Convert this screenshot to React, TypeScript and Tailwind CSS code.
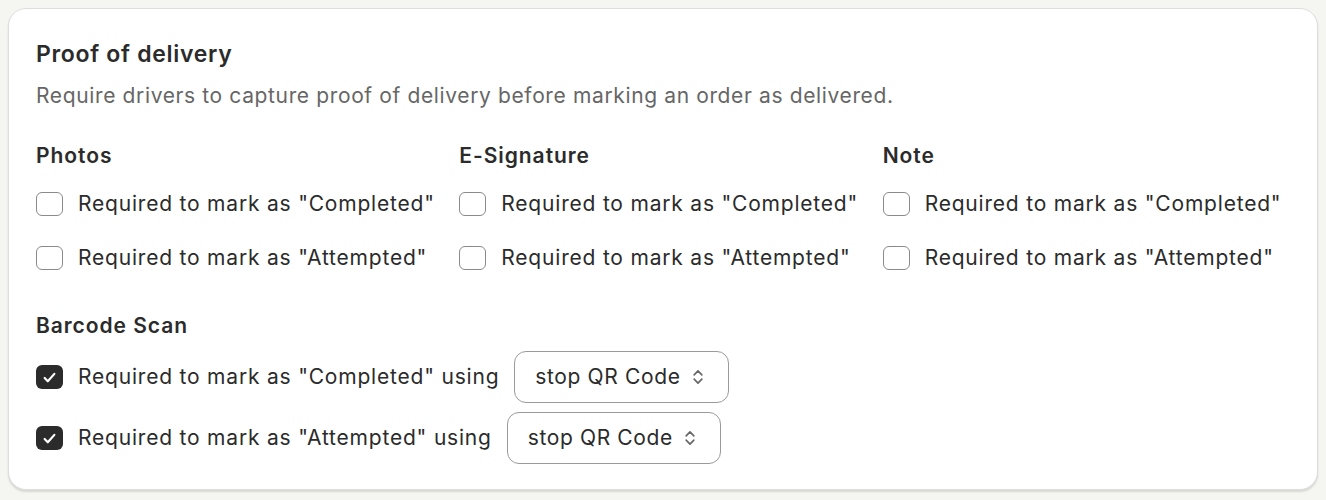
import { useState } from 'react'

type Col = { title: string; completed: boolean; attempted: boolean }

const COLS: Col[] = [
  { title: 'Photos', completed: false, attempted: false },
  { title: 'E-Signature', completed: false, attempted: false },
  { title: 'Note', completed: false, attempted: false },
]

function Check({ checked, onChange }: { checked: boolean; onChange: () => void }) {
  return (
    <button
      type="button"
      onClick={onChange}
      className={
        checked
          ? 'flex h-[24px] w-[27px] shrink-0 items-center justify-center rounded-[6px] bg-[#2b2b2b] text-white'
          : 'flex h-[24px] w-[27px] shrink-0 items-center justify-center rounded-[6px] border border-[#8a8a8a] bg-white'
      }
    >
      {checked && (
        <svg width="17" height="17" viewBox="0 0 14 14" fill="none">
          <path d="M3 7.4l2.6 2.7L11 4" stroke="currentColor" strokeWidth="1.8" strokeLinecap="round" strokeLinejoin="round" />
        </svg>
      )}
    </button>
  )
}

function Select() {
  return (
    <div className="flex h-[52px] items-center gap-[9px] rounded-[12px] border border-[#9a9a9a] bg-white pl-[20px] pr-[22px] text-[21px] tracking-[0.03em] text-[#2b2b2b]">
      <span>stop QR Code</span>
      <svg width="16" height="22" viewBox="0 0 14 20" fill="none" className="text-[#666]">
        <path d="M3.5 8l3.5-3.5L10.5 8" stroke="currentColor" strokeWidth="1.5" strokeLinecap="round" strokeLinejoin="round" />
        <path d="M3.5 12l3.5 3.5 3.5-3.5" stroke="currentColor" strokeWidth="1.5" strokeLinecap="round" strokeLinejoin="round" />
      </svg>
    </div>
  )
}

export default function App() {
  const [cols, setCols] = useState(COLS)
  const [scan, setScan] = useState({ completed: true, attempted: true })

  function toggle(i: number, key: 'completed' | 'attempted') {
    setCols((c) => c.map((col, j) => (j === i ? { ...col, [key]: !col[key] } : col)))
  }

  return (
    <div className="min-h-[500px] w-full bg-[#f5f5f1] p-2" style={{ fontFamily: 'Inter, "Noto Sans", sans-serif' }}>
      <div className="rounded-[18px] border border-[#dedede] bg-white px-[27px] pb-[25px] pt-[31px] shadow-[0_2px_2px_rgba(0,0,0,0.12)]">
        <h2 className="text-[23px] font-semibold leading-[28px] tracking-[0.03em] text-[#2b2b2b]">Proof of delivery</h2>
        <p className="mt-[14px] text-[21px] leading-[28px] tracking-[0.03em] text-[#666]">
          Require drivers to capture proof of delivery before marking an order as delivered.
        </p>

        {/* photo / signature / note */}
        <div className="mt-[32px] grid grid-cols-3 gap-4">
          {cols.map((col, i) => (
            <div key={col.title}>
              <h3 className="text-[21px] font-semibold leading-[28px] tracking-[0.045em] text-[#2b2b2b]">{col.title}</h3>
              <div className="mt-[20px] flex flex-col gap-[26px]">
                <label className="flex items-center gap-[15px] text-[21px] leading-[28px] tracking-[0.038em] text-[#2b2b2b]">
                  <Check checked={col.completed} onChange={() => toggle(i, 'completed')} />
                  Required to mark as "Completed"
                </label>
                <label className="flex items-center gap-[15px] text-[21px] leading-[28px] tracking-[0.038em] text-[#2b2b2b]">
                  <Check checked={col.attempted} onChange={() => toggle(i, 'attempted')} />
                  Required to mark as "Attempted"
                </label>
              </div>
            </div>
          ))}
        </div>

        {/* barcode */}
        <h3 className="mt-[40px] text-[21px] font-semibold leading-[28px] tracking-[0.045em] text-[#2b2b2b]">Barcode Scan</h3>
        <div className="mt-[11px] flex flex-col gap-[9px]">
          <div className="flex items-center gap-[15px] text-[21px] tracking-[0.038em] text-[#2b2b2b]">
            <Check checked={scan.completed} onChange={() => setScan((s) => ({ ...s, completed: !s.completed }))} />
            <span>Required to mark as "Completed" using</span>
            <Select />
          </div>
          <div className="flex items-center gap-[15px] text-[21px] tracking-[0.038em] text-[#2b2b2b]">
            <Check checked={scan.attempted} onChange={() => setScan((s) => ({ ...s, attempted: !s.attempted }))} />
            <span>Required to mark as "Attempted" using</span>
            <Select />
          </div>
        </div>
      </div>
    </div>
  )
}
